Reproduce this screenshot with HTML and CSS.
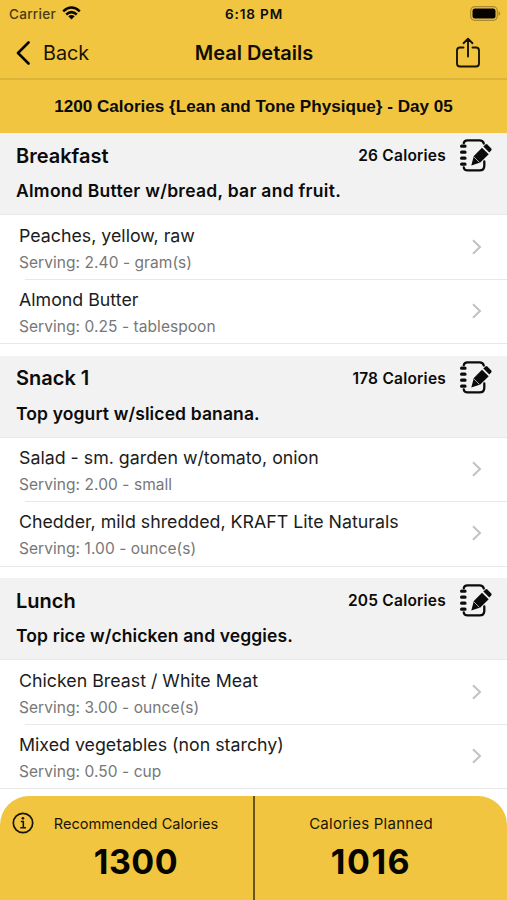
FILE: index.html
```html
<!DOCTYPE html>
<html lang="en">
<head>
<meta charset="utf-8">
<title>Meal Details</title>
<link rel="stylesheet" href="styles.css">
</head>
<body>
<svg class="defs" width="0" height="0" aria-hidden="true">
  <symbol id="chevron" viewBox="0 0 12 18"><path d="M2 2.200 9 9 2 15.800" fill="none" stroke="#c2c2c4" stroke-width="2"/></symbol>
  <symbol id="edit" viewBox="0 0 34 34">
    <g fill="none" stroke="#0b0b0b" stroke-width="2.300" stroke-linecap="round">
      <path d="M4.800 4.200C5 2.400 6.400 1.400 8.500 1.400H20.500C23 1.400 24.300 2.500 24.800 4.500"/>
      <path d="M4.800 28.500C5 30.500 6.300 31.400 8.700 31.400H20.500C23.600 31.400 25.300 29.800 25.300 26.700V22.500"/>
    </g>
    <path d="M2.600 7.200H6M2.600 13.200H6M2.600 19.200H6M2.600 25.200H6" stroke="#0b0b0b" stroke-width="3.200" stroke-linecap="round"/>
    <path d="M12.300 26.500 14.800 17 23 8.700 29.700 15.200 21.300 23.500Z" fill="#0b0b0b"/>
    <path d="M24.300 7.600 26.500 5.400Q27.400 4.700 28.300 5.400L32.300 9.500Q33 10.400 32.300 11.200L30.300 13.400Z" fill="#0b0b0b"/>
    <path d="M15 18 20.300 23.300" stroke="#f2f2f2" stroke-width=".7"/>
  </symbol>
</svg>
<header class="top">
  <div class="status">
    <span class="carrier">Carrier</span>
    <svg class="wifi" width="19" height="14" viewBox="0 0 19 14"><g fill="none" stroke="#080600" stroke-width="2.500"><path d="M1.200 5.300Q9.500-2.300 17.800 5.300"/><path d="M4.200 8.500Q9.500 3.800 14.800 8.500"/></g><path d="M6.300 10.300Q9.500 7.700 12.700 10.300L9.500 13.500Z" fill="#080600"/></svg>
    <time class="clock">6:18 PM</time>
    <svg class="battery" width="31" height="15" viewBox="0 0 31 15"><rect x=".7" y=".7" width="26.600" height="13.600" rx="4" fill="none" stroke="#a98b2d" stroke-width="1.200"/><rect x="2.500" y="2.500" width="23" height="10" rx="2.500" fill="#050400"/><path d="M28.500 5v5q1.700-.8 1.700-2.500T28.500 5Z" fill="#a98b2d"/></svg>
  </div>
  <nav class="nav">
    <a class="back"><svg width="16" height="24" viewBox="0 0 16 24"><path d="M13.500 1.500 3 12 13.500 22.500" fill="none" stroke="#080600" stroke-width="2.600" stroke-linecap="round" stroke-linejoin="round"/></svg><span>Back</span></a>
    <h1>Meal Details</h1>
    <svg class="share" width="26" height="32" viewBox="0 0 26 32"><g fill="none" stroke="#1a1503" stroke-width="1.900" stroke-linecap="round" stroke-linejoin="round"><path d="M8.500 10.500H5Q2 10.500 2 13.500V26.500Q2 29.500 5 29.500H21Q24 29.500 24 26.500V13.500Q24 10.500 21 10.500H17.500M13 19.500V2M8.500 6.200 13 1.800 17.500 6.200"/></g></svg>
  </nav>
</header>
<h2 class="plan"><span>1200 Calories {Lean and Tone Physique} - Day 05</span></h2>
<main>
  <section class="meal">
    <div class="head"><div class="line"><h3>Breakfast</h3><span class="cal">26 Calories</span><svg class="edit"><use href="#edit"/></svg></div><p class="wide">Almond Butter w/bread, bar and fruit.</p></div>
    <div class="row"><div><p class="food">Peaches, yellow, raw</p><p class="serving">Serving: 2.40 - gram(s)</p></div><svg class="chev"><use href="#chevron"/></svg></div>
    <div class="row"><div><p class="food">Almond Butter</p><p class="serving">Serving: 0.25 - tablespoon</p></div><svg class="chev"><use href="#chevron"/></svg></div>
  </section>
  <section class="meal">
    <div class="head"><div class="line"><h3>Snack 1</h3><span class="cal">178 Calories</span><svg class="edit"><use href="#edit"/></svg></div><p>Top yogurt w/sliced banana.</p></div>
    <div class="row"><div><p class="food">Salad - sm. garden w/tomato, onion</p><p class="serving">Serving: 2.00 - small</p></div><svg class="chev"><use href="#chevron"/></svg></div>
    <div class="row"><div><p class="food">Chedder, mild shredded, KRAFT Lite Naturals</p><p class="serving">Serving: 1.00 - ounce(s)</p></div><svg class="chev"><use href="#chevron"/></svg></div>
  </section>
  <section class="meal">
    <div class="head"><div class="line"><h3>Lunch</h3><span class="cal">205 Calories</span><svg class="edit"><use href="#edit"/></svg></div><p>Top rice w/chicken and veggies.</p></div>
    <div class="row"><div><p class="food">Chicken Breast / White Meat</p><p class="serving">Serving: 3.00 - ounce(s)</p></div><svg class="chev"><use href="#chevron"/></svg></div>
    <div class="row"><div><p class="food">Mixed vegetables (non starchy)</p><p class="serving">Serving: 0.50 - cup</p></div><svg class="chev"><use href="#chevron"/></svg></div>
  </section>
</main>
<footer class="totals">
  <div class="total rec"><svg class="info" width="22" height="22" viewBox="0 0 22 22"><circle cx="11" cy="11" r="9.700" fill="none" stroke="#1a1503" stroke-width="1.700"/><circle cx="10.900" cy="6.300" r="1.350" fill="#1a1503"/><path d="M8.800 9.500H11.300V15.500M8.300 15.700H14" fill="none" stroke="#1a1503" stroke-width="1.600"/></svg><span>Recommended Calories</span><strong>1300</strong></div>
  <div class="total planned"><span>Calories Planned</span><strong>1016</strong></div>
</footer>
</body>
</html>
```
FILE: styles.css
```css
* { box-sizing: border-box; margin: 0; padding: 0; }
body { width: 507px; height: 900px; overflow: hidden; background: #fff; color: #0b0b0b; font-family: Inter, "Liberation Sans", sans-serif; display: flex; flex-direction: column; }
.defs { position: absolute; }
.top { height: 80px; background: #f1c540; border-bottom: 2px solid #dcb43b; flex: none; }
.status { height: 28px; display: grid; grid-template-columns: 53px 117px 150px 1fr 31px; align-items: center; padding: 0 6px 0 9px; font-size: 13.600px; }
.carrier { color: #4a3c12; font-weight: 500; letter-spacing: .25px; }
.clock { font-weight: 600; white-space: nowrap; text-align: center; letter-spacing: .85px; }
.wifi { margin-bottom: 2px; }
.battery { grid-column: 5; margin-bottom: 1px; }
.nav { height: 49px; display: grid; grid-template-columns: 1fr 160px 1fr; align-items: center; padding: 0 26px; }
.back { display: flex; align-items: center; gap: 12px; margin-left: -11px; font-size: 19.800px; color: #171302; }
.nav h1 { font-size: 20px; font-weight: 600; text-align: center; white-space: nowrap; color: #100d02; padding: 1px 0 0 1px; }
.share { justify-self: end; }
.plan { height: 53px; flex: none; background: #f1c540; font: bold 17.100px/53px "Liberation Sans", sans-serif; text-align: center; white-space: nowrap; }
main { flex: none; height: 667px; }
.meal { height: 222.700px; }
.head { height: 82px; background: #f2f2f2; border-bottom: 1px solid #e8e8e8; padding: 4px 14px 0 16px; }
.line { display: flex; align-items: center; height: 37px; }
.line h3 { font-size: 20px; font-weight: 600; flex: 1; line-height: 35px; padding-top: 1px; }
.cal { font-size: 15.500px; font-weight: 600; letter-spacing: .22px; margin-right: 13px; }
.edit { width: 34px; height: 34px; }
.head p { font-size: 17.500px; font-weight: 600; line-height: 34px; letter-spacing: .12px; white-space: nowrap; }
.head .wide { letter-spacing: .28px; }
.row { height: 64.500px; display: flex; align-items: center; justify-content: space-between; padding: 0 24px 0 19px; border-bottom: 1px solid #e8e8e8; }
.row:nth-child(2) { border-bottom: 0; background: linear-gradient(#e8e8e8, #e8e8e8) 25px 100% / 100% 1px no-repeat; }
.row > div { padding-top: 3.600px; }
.food { font-size: 17.800px; line-height: 26px; color: #1c1c1c; white-space: nowrap; }
.serving { font-size: 15.500px; line-height: 27px; letter-spacing: .06px; color: #777; white-space: nowrap; }
.chev { width: 12px; height: 18px; margin-bottom: 1px; }
.totals { height: 104px; margin-top: -4px; flex: none; position: relative; display: grid; grid-template-columns: 255px 252px; background: #f1c540; border-radius: 29px 29px 0 0; overflow: hidden; }
.total { display: flex; flex-direction: column; align-items: center; padding-top: 16px; color: #1a1503; }
.rec { border-right: 2px solid #68551b; padding-left: 19px; position: relative; }
.planned { padding-right: 20px; }
.total span { font-size: 14.600px; line-height: 24px; }
.total strong { font-size: 34px; line-height: 52px; font-weight: 700; color: #060500; letter-spacing: .5px; }
.planned span { font-size: 15px; letter-spacing: .25px; }
.planned strong { letter-spacing: 1.500px; }
.info { position: absolute; left: 12px; top: 16px; }
```
